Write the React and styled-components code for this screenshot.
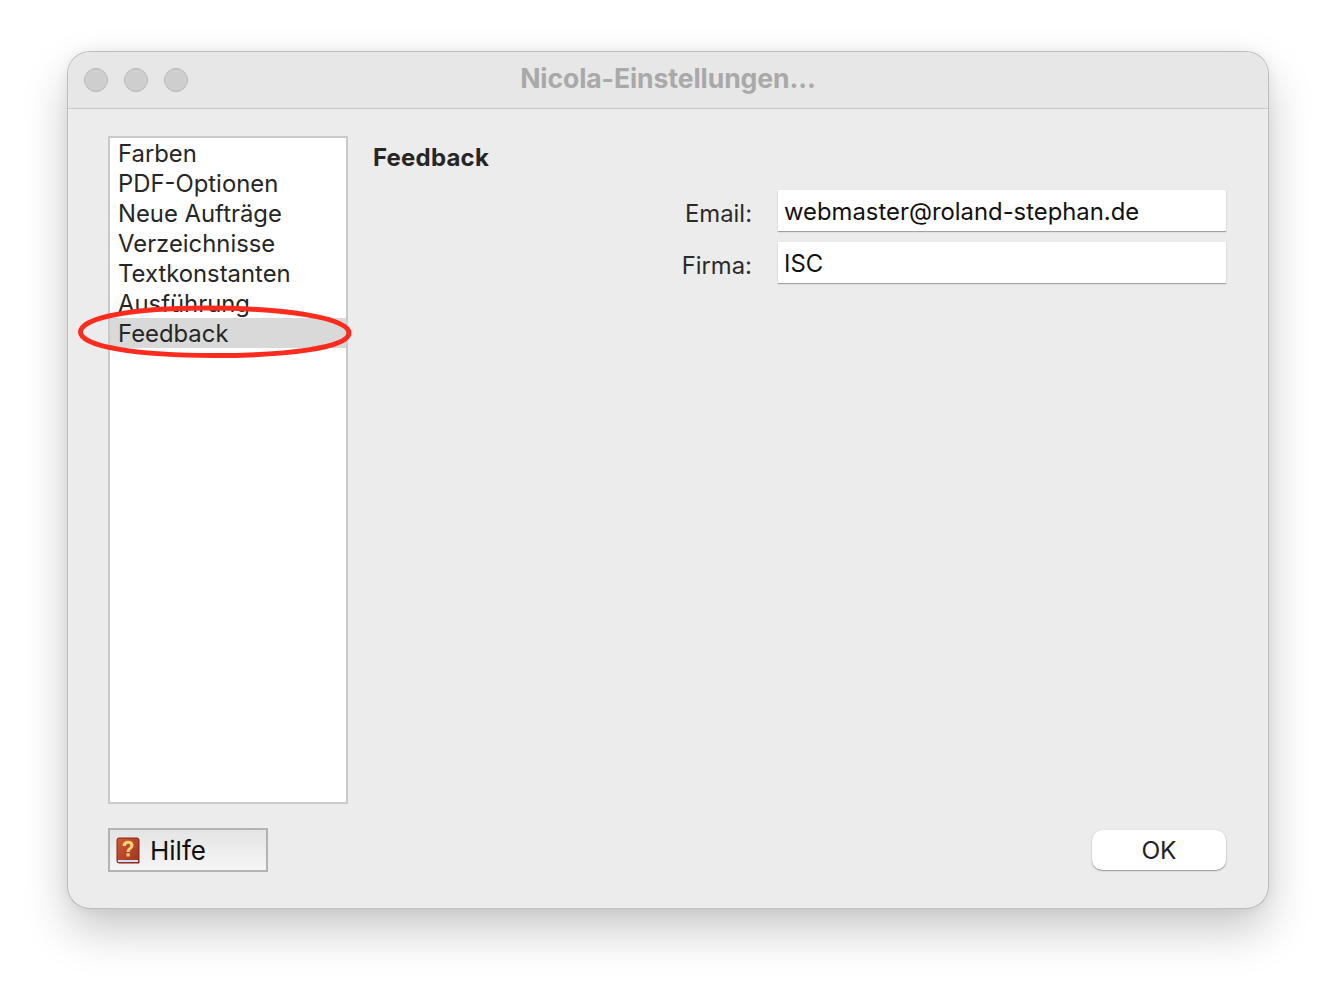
import React from 'react';
import styled, { createGlobalStyle } from 'styled-components';

const Global = createGlobalStyle`
  html, body { margin: 0; padding: 0; background: #fff; }
  body { font-family: Inter, "Liberation Sans", sans-serif; }
  * { box-sizing: border-box; }
`;
const Page = styled.div`
  width: 1336px; height: 992px; padding: 52px 68px 84px; background: #fff; overflow: hidden;
`;
const Window = styled.div`
  position: relative; width: 1200px; height: 856px; display: flex; flex-direction: column;
  background: #ececec; border-radius: 22px; overflow: visible;
  box-shadow: 0 0 0 1px #bdbdbd, 0 22px 46px rgba(0,0,0,.22), 0 0 14px rgba(0,0,0,.07);
`;
const TitleBar = styled.div`
  position: relative; height: 57px; flex: none; display: flex; align-items: center; justify-content: center;
  background: #e7e7e7; border-bottom: 1px solid #c9c9c9; border-radius: 22px 22px 0 0;
`;
const Lights = styled.div`
  position: absolute; left: 16px; top: 16px; display: flex; gap: 16px;
`;
const Light = styled.span`
  width: 24px; height: 24px; border-radius: 50%; background: #cecece; border: 1px solid #b9b9b9;
`;
const Title = styled.div`
  font-size: 26.6px; font-weight: 700; color: #a9a9a9; letter-spacing: -.1px; position: relative; top: -2px;
`;
const Body = styled.div`
  flex: 1; display: flex; flex-direction: column; padding: 27px 42px 36px 40px;
`;
const Main = styled.div`
  flex: none; height: 668px; display: flex; gap: 25px;
`;
const List = styled.ul`
  width: 240px; margin: 0; padding: 0; list-style: none; background: #fff; border: 2px solid #c9c9c9;
`;
const Item = styled.li`
  height: 30px; padding-left: 8px; line-height: 32.5px; font-size: 23.85px; color: #262626;
  background: ${p => (p.$selected ? '#d9d9d9' : 'transparent')};
`;
const Panel = styled.div`
  flex: 1; padding-top: 7px; display: flex; flex-direction: column;
`;
const Heading = styled.h2`
  margin: 0; height: 30px; line-height: 30px; font-size: 24px; letter-spacing: .2px; font-weight: 700; color: #262626;
`;
const Form = styled.div`
  margin-top: 17px; display: flex; flex-direction: column; gap: 11px;
`;
const Field = styled.div`
  display: flex; justify-content: flex-end; align-items: center; gap: 26px;
`;
const Label = styled.label`
  font-size: 23.85px; color: #2b2b2b; position: relative; top: 3px;
`;
const Input = styled.div`
  width: 448px; height: 41px; padding-left: 6px; line-height: 44px; font-size: 23.85px; color: #111; background: #fff;
  box-shadow: 0 1px 1px rgba(0,0,0,.3), 0 0 1px rgba(0,0,0,.1);
`;
const Footer = styled.div`
  margin-top: 24px; display: flex; justify-content: space-between; align-items: center;
`;
const HelpButton = styled.button`
  width: 160px; height: 44px; padding: 1px 0 0 6px; display: flex; align-items: center; gap: 10px;
  border: 2px solid #b3b3b3; border-radius: 0; background: linear-gradient(#e4e4e4, #f6f6f6);
  font: 400 26px/36px Inter, "Liberation Sans", sans-serif; color: #111;
`;
const OkButton = styled.button`
  width: 134px; height: 40px; padding: 0 0 1px; border: none; border-radius: 10px; background: #fff;
  box-shadow: 0 1px 1.5px rgba(0,0,0,.35), 0 0 1px rgba(0,0,0,.2);
  font: 400 24.5px Inter, "Liberation Sans", sans-serif; color: #222;
`;
const Oval = styled.svg`
  position: absolute; left: 8px; top: 253px; pointer-events: none;
`;

const HelpBook = () => (
  <svg width="24" height="28" viewBox="0 0 24 28" aria-hidden="true">
    <defs>
      <linearGradient id="book" x1="0" y1="0" x2="1" y2="1">
        <stop offset="0" stopColor="#cf5a32" />
        <stop offset="1" stopColor="#9e3320" />
      </linearGradient>
    </defs>
    <path d="M3 1h18a2 2 0 0 1 2 2v23H3a2 2 0 0 1-2-2V3a2 2 0 0 1 2-2z" fill="url(#book)" stroke="#83261a" strokeWidth="1" />
    <rect x="2" y="23" width="20" height="2" fill="#cfe3f5" />
    <path d="M6.500 9C6.800 5.500 9.200 3.800 12.200 3.800c3.200 0 5.300 1.800 5.300 4.500 0 3.900-3.900 3.700-3.900 6.700h-3c0-4.500 3.700-4.300 3.700-6.600 0-1-.7-1.700-2-1.700-1.300 0-2.100.8-2.400 2.300z" fill="#ffd27a" />
    <rect x="10.500" y="16.300" width="3.200" height="3.200" fill="#ffd27a" />
  </svg>
);

const items = ['Farben', 'PDF-Optionen', 'Neue Aufträge', 'Verzeichnisse', 'Textkonstanten', 'Ausführung', 'Feedback'];

export default function App() {
  return (
    <Page>
      <Global />
      <Window>
        <TitleBar>
          <Lights><Light /><Light /><Light /></Lights>
          <Title>Nicola-Einstellungen...</Title>
        </TitleBar>
        <Body>
          <Main>
            <List>
              {items.map(i => <Item key={i} $selected={i === 'Feedback'}>{i}</Item>)}
            </List>
            <Panel>
              <Heading>Feedback</Heading>
              <Form>
                <Field><Label>Email:</Label><Input>webmaster@roland-stephan.de</Input></Field>
                <Field><Label>Firma:</Label><Input>ISC</Input></Field>
              </Form>
            </Panel>
          </Main>
          <Footer>
            <HelpButton><HelpBook />Hilfe</HelpButton>
            <OkButton>OK</OkButton>
          </Footer>
        </Body>
        <Oval width="280" height="56" viewBox="0 0 280 56" aria-hidden="true">
          <path d="M4.500 27C4.500 12 60 3 128 3C210 3 273 13 273 28C273 43 210 50.500 138 50.500C64 50.500 4.500 42 4.500 27Z" fill="none" stroke="#fb2c1e" strokeWidth="5" />
        </Oval>
      </Window>
    </Page>
  );
}
